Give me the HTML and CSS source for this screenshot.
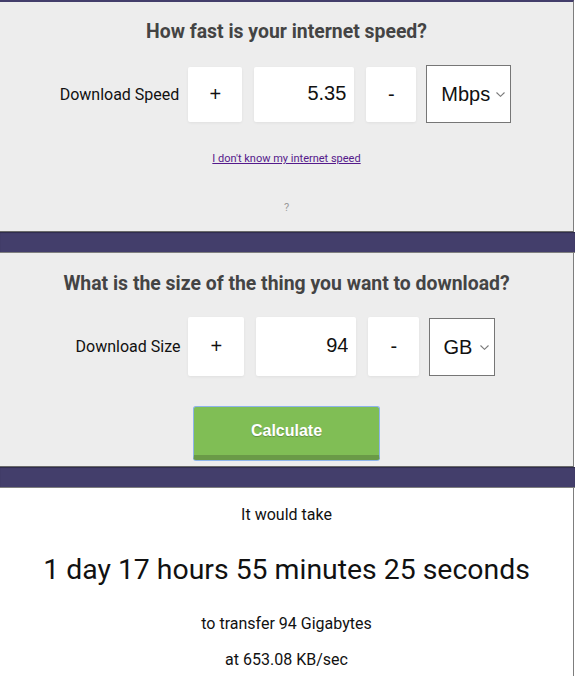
FILE: index.html
```html
<!DOCTYPE html>
<html lang="en">
<head>
    <meta charset="UTF-8">
    <meta name="viewport" content="width=device-width, initial-scale=1.0">
    <title>Download Time Calculator</title>
    <link rel="stylesheet" href="styles.css">
</head>
<body>

<div class="card card-speed">
    <h2>How fast is your internet speed?</h2>

    <div class="field-row">
        <label for="speedInput" class="field-label">Download Speed</label>
        <button class="step-btn plus">+</button>
        <input type="text" id="speedInput" class="num-input" value="5.35">
        <button class="step-btn minus">-</button>
        <div class="select-wrap">
            <select class="unit-select speed-unit">
                <option>Mbps</option>
                <option>Kbps</option>
                <option>Gbps</option>
            </select>
            <svg class="chevron" width="9" height="5" viewBox="0 0 9 5"><path d="M0.5 0.5 L4.5 4.3 L8.5 0.5" fill="none" stroke="#7a7a7a" stroke-width="1.1"/></svg>
        </div>
    </div>

    <a href="#" class="help-link">I don't know my internet speed</a>
    <div class="help-mark">?</div>
</div>

<div class="band"></div>

<div class="card card-size">
    <h2>What is the size of the thing you want to download?</h2>

    <div class="field-row">
        <label for="sizeInput" class="field-label">Download Size</label>
        <button class="step-btn plus">+</button>
        <input type="text" id="sizeInput" class="num-input" value="94">
        <button class="step-btn minus">-</button>
        <div class="select-wrap">
            <select class="unit-select size-unit">
                <option>GB</option>
                <option>MB</option>
                <option>TB</option>
            </select>
            <svg class="chevron" width="9" height="5" viewBox="0 0 9 5"><path d="M0.5 0.5 L4.5 4.3 L8.5 0.5" fill="none" stroke="#7a7a7a" stroke-width="1.1"/></svg>
        </div>
    </div>

    <button class="btn-calculate">Calculate</button>
</div>

<div class="band"></div>

<div class="card card-result">
    <p class="result-lead">It would take</p>
    <p class="result-time">1 day 17 hours 55 minutes 25 seconds</p>
    <p class="result-note">to transfer 94 Gigabytes</p>
    <p class="result-rate">at 653.08 KB/sec</p>
</div>

</body>
</html>
```

FILE: styles.css
```css
  body {
      font-family: Roboto, "Liberation Sans", Arial, sans-serif;
      margin: 0;
      background-color: #fff;
      color: #111;
  }
  .card {
      margin-right: 1px;
      background-color: #ededed;
      border-right: 1px solid #7d7d7d;
      border-bottom: 1px solid #6a6a6a;
      text-align: center;
  }
  .card-speed {
      border-top: 2px solid #433e6b;
      padding: 18px 0 15px;
  }
  .card-size {
      padding: 19px 0 6px;
  }
  .card-result {
      background-color: #fff;
      border-bottom: none;
      padding: 15px 0 20px;
  }
  .band {
      height: 20px;
      background-color: #433e6b;
      border-bottom: 1px solid #7f7f7f;
      box-shadow: inset 0 1px 1px rgba(0, 0, 0, 0.3);
  }
  h2 {
      margin: -1px 0;
      font-size: 19.4px;
      line-height: 26px;
      font-weight: 700;
      color: #444;
  }
  .field-row {
      display: flex;
      justify-content: center;
      align-items: center;
      margin-top: 21px;
      padding-right: 2px;
  }
  .field-label {
      font-size: 16px;
      color: #111;
      margin-right: 9px;
  }
  .step-btn,
  .num-input {
      height: 55px;
      box-sizing: border-box;
      border: none;
      border-radius: 2px;
      background-color: #fff;
      box-shadow: 0 1px 3px rgba(0, 0, 0, 0.06);
      font-family: "Liberation Sans", Arial, sans-serif;
      font-size: 20px;
      color: #111;
  }
  .step-btn {
      padding: 0;
      cursor: pointer;
  }
  .step-btn.plus {
      width: 54px;
      margin-right: 12px;
  }
  .step-btn.minus {
      width: 50px;
      margin-right: 10px;
  }
  .num-input {
      width: 100px;
      margin-right: 12px;
      padding: 0 8px 2px 0;
      text-align: right;
  }
  .select-wrap {
      position: relative;
      display: flex;
  }
  .unit-select {
      appearance: none;
      height: 58px;
      box-sizing: border-box;
      border: 1px solid #767676;
      border-radius: 0;
      background-color: #fff;
      font-family: "Liberation Sans", Arial, sans-serif;
      font-size: 20px;
      color: #111;
      padding: 0 0 0 14px;
  }
  .chevron {
      position: absolute;
      right: 6px;
      top: 27px;
  }
  .speed-unit {
      width: 85px;
  }
  .size-unit {
      width: 66px;
      padding-left: 13px;
  }
  .card-size .field-label {
      margin-right: 8px;
  }
  .card-size .step-btn,
  .card-size .num-input {
      height: 59px;
  }
  .card-size .step-btn.plus {
      width: 56px;
  }
  .card-size .step-btn.minus {
      width: 51px;
  }
  .help-link {
      display: block;
      width: max-content;
      margin: 28px auto 0;
      font-size: 11px;
      line-height: 16px;
      color: #551a8b;
  }
  .help-mark {
      margin-top: 33px;
      font-size: 11px;
      line-height: 16px;
      color: #999;
  }
  .btn-calculate {
      display: block;
      margin: 30px auto 0;
      width: 187px;
      height: 54px;
      font-family: "Liberation Sans", Arial, sans-serif;
      font-size: 16px;
      font-weight: bold;
      color: #fff;
      text-shadow: 0 1px 1px rgba(0, 0, 0, 0.25);
      background-color: #80be55;
      border: 1px solid #8db4ea;
      border-bottom: 5px solid #6a9a47;
      border-radius: 3px;
      box-shadow: 0 1px 0 #8db4ea;
      cursor: pointer;
  }
  .result-lead,
  .result-note,
  .result-rate {
      margin: 0;
      font-size: 16px;
      line-height: 24px;
  }
  .result-time {
      margin: 25px 0 0;
      font-size: 28.4px;
      line-height: 36px;
  }
  .result-note {
      margin-top: 24px;
  }
  .result-rate {
      margin-top: 12px;
  }
```
